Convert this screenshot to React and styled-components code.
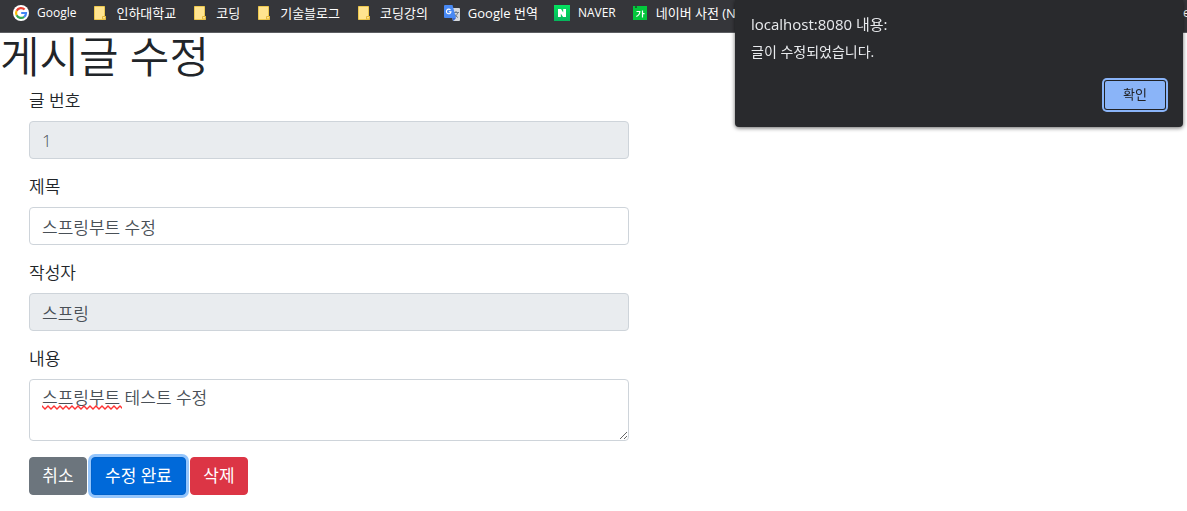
import React, { useState } from 'react';
import styled, { createGlobalStyle, css } from 'styled-components';

const GlobalStyle = createGlobalStyle`
    *, *::before, *::after {
        box-sizing: border-box;
    }

    body {
        margin: 0;
        background: #fff;
        color: #212529;
        font-family: "Open Sans", "Noto Sans CJK KR", sans-serif;
        font-size: 17px;
        font-weight: 350;
        line-height: 24px;
        overflow-x: hidden;
    }
`;

const BookmarkBar = styled.nav`
    display: flex;
    align-items: center;
    gap: 16px;
    height: 33px;
    padding: 0 0 6px 13px;
    background: #35363a;
    border-bottom: 1px solid #5c5e62;
    font-weight: 400;
    overflow: hidden;
`;

const Bookmark = styled.a`
    display: flex;
    flex: none;
    align-items: center;
    gap: 8px;
    color: #fff;
    font-size: ${({ $latin }) => ($latin ? '12px' : '13px')};
    line-height: 20px;
    text-decoration: none;
    white-space: nowrap;

    svg {
        display: block;
        flex: none;
    }
`;

const CutBookmark = styled(Bookmark)`
    width: 4px;
    margin-left: auto;
    overflow: hidden;
`;

const Title = styled.h1`
    margin: 0 0 8px;
    font-size: 43px;
    font-weight: 350;
    line-height: 48px;
`;

const Form = styled.form`
    max-width: 658px;
    padding: 0 29px 16px;
`;

const FormGroup = styled.div`
    margin-bottom: 16px;
`;

const Label = styled.label`
    display: block;
    margin-bottom: 8px;
`;

const control = css`
    display: block;
    width: 100%;
    padding: 6px 12px;
    border: 1px solid #ced4da;
    border-radius: 4px;
    background: #fff;
    color: #495057;
    font: inherit;
    outline: none;
`;

const Input = styled.input`
    ${control}
    height: 38px;

    &:read-only {
        background: #e9ecef;
    }
`;

const TextareaWrap = styled.div`
    position: relative;
`;

const Textarea = styled.textarea`
    ${control}
    height: 62px;
    resize: vertical;
`;

const Squiggle = styled.svg`
    position: absolute;
    top: 26px;
    left: 13px;
    pointer-events: none;
`;

const Buttons = styled.div`
    display: flex;
    gap: 4px;
`;

const Button = styled.button`
    min-width: ${({ $wide }) => ($wide ? '95px' : '58px')};
    height: 38px;
    padding: 0 12px;
    border: 1px solid ${({ $border, $color }) => $border || $color};
    border-radius: 4px;
    background: ${({ $color }) => $color};
    box-shadow: ${({ $ring }) => ($ring ? '0 0 0 3px #94c5fc' : 'none')};
    color: #fff;
    font: inherit;
    font-weight: 400;
    white-space: nowrap;
    outline: none;
`;

const Dialog = styled.div`
    position: fixed;
    top: 0;
    right: 4px;
    display: flex;
    flex-direction: column;
    width: 448px;
    padding: 14px 18px 18px 16px;
    border-radius: 0 0 4px 4px;
    background: #292a2d;
    box-shadow: 0 1px 4px rgba(0, 0, 0, .6);
    color: #e8eaed;
    font-weight: 400;
`;

const DialogTitle = styled.h2`
    margin: 0 0 8px;
    font-size: 15px;
    font-weight: 400;
    line-height: 20px;
`;

const DialogMessage = styled.p`
    margin: 0 0 19px;
    font-size: 14px;
    line-height: 20px;
`;

const DialogButton = styled.button`
    align-self: flex-end;
    width: 60px;
    height: 28px;
    padding: 0 0 2px;
    border: 0;
    border-radius: 2px;
    background: #8ab4f8;
    box-shadow: 0 0 0 1px #202124, 0 0 0 3px #8ab4f8;
    color: #202124;
    font: inherit;
    font-size: 13px;
    outline: none;
`;

function GoogleIcon() {
    return (
        <svg width="16" height="16" viewBox="0 0 16 16">
            <circle cx="8" cy="8" r="8" fill="#fff" />
            <g fill="none" strokeWidth="2.2">
                <path d="M11.6 4.6A5 5 0 0 0 3.6 5.7" stroke="#ea4335" />
                <path d="M3.6 5.7A5 5 0 0 0 3.6 10.3" stroke="#fbbc05" />
                <path d="M3.6 10.3A5 5 0 0 0 11.2 11.8" stroke="#34a853" />
                <path d="M11.2 11.8A5 5 0 0 0 13 8H8.2" stroke="#4285f4" />
            </g>
        </svg>
    );
}

function FolderIcon() {
    return (
        <svg width="16" height="16" viewBox="0 0 16 16">
            <path d="M2.5 1.5h10v10h1v3h-11z" fill="#ffe48f" stroke="#edc84e" />
            <path d="M10.5 14v-2.5h3V14z" fill="#ffe48f" stroke="#e5b93c" />
        </svg>
    );
}

function TranslateIcon() {
    return (
        <svg width="16" height="16" viewBox="0 0 16 16">
            <path d="M6 3h9a1 1 0 0 1 1 1v11a1 1 0 0 1-1 1H9z" fill="#d5d8dc" />
            <path d="M9 7.5h6M12 6v1.5M13.8 7.5c-.5 2-2 3.8-3.6 5M10.5 9c.8 1.6 2 2.7 3.5 3.6" fill="none" stroke="#6f7d8c" />
            <path d="M1 0h7.5l3.5 13H1a1 1 0 0 1-1-1V1a1 1 0 0 1 1-1z" fill="#4889f4" />
            <path d="M12 13H8l1.5 3z" fill="#3367d6" />
            <path d="M6.5 5A2.3 2.3 0 1 0 7 6.7H4.8" fill="none" stroke="#fff" strokeWidth="1.1" />
        </svg>
    );
}

function NaverIcon() {
    return (
        <svg width="16" height="16" viewBox="0 0 16 16">
            <defs>
                <linearGradient id="naver" x1="0" y1="0" x2="0" y2="1">
                    <stop offset="0" stopColor="#03e35f" />
                    <stop offset="1" stopColor="#06b55c" />
                </linearGradient>
            </defs>
            <path d="M0 0h16v16H0z" fill="url(#naver)" />
            <path d="M4 4h3l2.2 3.4V4H12v8H9L6.8 8.6V12H4z" fill="#fff" />
        </svg>
    );
}

function DictionaryIcon() {
    return (
        <svg width="16" height="16" viewBox="0 0 16 16">
            <path d="M1 1h2v2h2V1h10v14H1z" fill="#03c73c" />
            <path d="M3 1h2v1.5H3z" fill="#067d2a" />
            <path d="M4.5 6.5h3.3c0 2.3-1.2 4-3.5 5M10.5 5.5v7M10.5 8.7h2" fill="none" stroke="#fff" strokeWidth="1.2" />
        </svg>
    );
}

const bookmarks = [
    { name: 'Google', icon: GoogleIcon, latin: true },
    { name: '인하대학교', icon: FolderIcon },
    { name: '코딩', icon: FolderIcon },
    { name: '기술블로그', icon: FolderIcon },
    { name: '코딩강의', icon: FolderIcon },
    { name: 'Google 번역', icon: TranslateIcon },
    { name: 'NAVER', icon: NaverIcon, latin: true },
    { name: '네이버 사전 (N', icon: DictionaryIcon },
];

function Bookmarks() {
    return (
        <BookmarkBar>
            {bookmarks.map(({ name, icon: Icon, latin }) => (
                <Bookmark key={name} href="#" $latin={latin}>
                    <Icon />
                    {name}
                </Bookmark>
            ))}
            <CutBookmark href="#" $latin>e</CutBookmark>
        </BookmarkBar>
    );
}

function Alert({ onClose }) {
    return (
        <Dialog role="alertdialog" aria-labelledby="alert-title" aria-describedby="alert-message">
            <DialogTitle id="alert-title">localhost:8080 내용:</DialogTitle>
            <DialogMessage id="alert-message">글이 수정되었습니다.</DialogMessage>
            <DialogButton type="button" onClick={onClose}>확인</DialogButton>
        </Dialog>
    );
}

function PostForm() {
    const [title, setTitle] = useState('스프링부트 수정');
    const [content, setContent] = useState('스프링부트 테스트 수정');

    return (
        <Form onSubmit={e => e.preventDefault()}>
            <FormGroup>
                <Label htmlFor="id">글 번호</Label>
                <Input id="id" type="text" value="1" readOnly />
            </FormGroup>
            <FormGroup>
                <Label htmlFor="title">제목</Label>
                <Input id="title" type="text" value={title} onChange={e => setTitle(e.target.value)} />
            </FormGroup>
            <FormGroup>
                <Label htmlFor="author">작성자</Label>
                <Input id="author" type="text" value="스프링" readOnly />
            </FormGroup>
            <FormGroup>
                <Label htmlFor="content">내용</Label>
                <TextareaWrap>
                    <Textarea
                        id="content"
                        spellCheck={false}
                        value={content}
                        onChange={e => setContent(e.target.value)}
                    />
                    {content.startsWith('스프링부트') && (
                        <Squiggle width="80" height="6" viewBox="0 0 80 6">
                            <defs>
                                <pattern id="wave" width="6" height="6" patternUnits="userSpaceOnUse">
                                    <path d="M-1 1l1 0 3 3 3-3 1 0" fill="none" stroke="#f33" strokeWidth="1.3" />
                                </pattern>
                            </defs>
                            <rect width="80" height="6" fill="url(#wave)" />
                        </Squiggle>
                    )}
                </TextareaWrap>
            </FormGroup>
            <Buttons>
                <Button type="button" $color="#6c757d">취소</Button>
                <Button type="submit" $color="#0069d9" $border="#0062cc" $wide $ring>수정 완료</Button>
                <Button type="button" $color="#dc3545">삭제</Button>
            </Buttons>
        </Form>
    );
}

function App() {
    const [alertOpen, setAlertOpen] = useState(true);

    return (
        <>
            <GlobalStyle />
            <Bookmarks />
            <main>
                <Title>게시글 수정</Title>
                <PostForm />
            </main>
            {alertOpen && <Alert onClose={() => setAlertOpen(false)} />}
        </>
    );
}

export default App;
